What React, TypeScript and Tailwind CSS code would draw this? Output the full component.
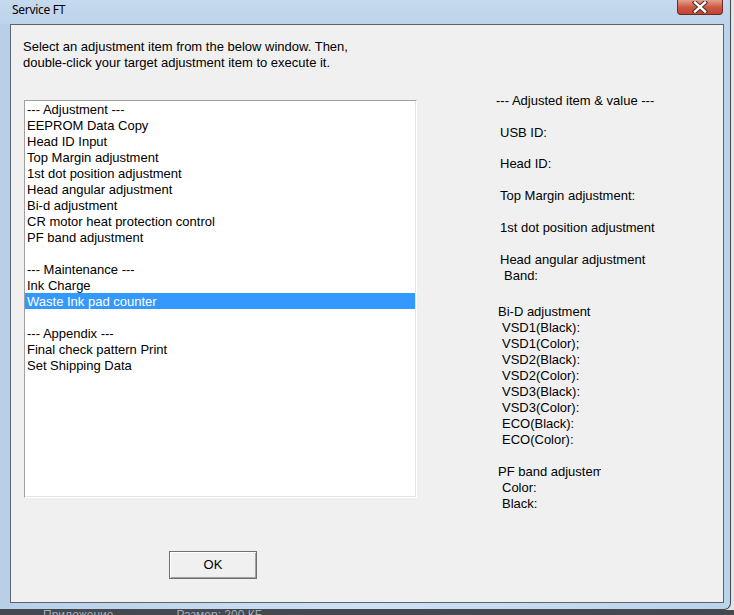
import React from "react";

const listItems: string[] = [
  "--- Adjustment ---",
  "EEPROM Data Copy",
  "Head ID Input",
  "Top Margin adjustment",
  "1st dot position adjustment",
  "Head angular adjustment",
  "Bi-d adjustment",
  "CR motor heat protection control",
  "PF band adjustment",
  "",
  "--- Maintenance ---",
  "Ink Charge",
  "Waste Ink pad counter",
  "",
  "--- Appendix ---",
  "Final check pattern Print",
  "Set Shipping Data",
];

const SELECTED = 12;

function CloseGlyph() {
  return (
    <svg width="16" height="12" viewBox="0 0 16 12">
      <path d="M3 1.5 L13 10.5 M13 1.5 L3 10.5" stroke="#4a2a26" strokeWidth="4.4" strokeLinecap="square" />
      <path d="M3 1.5 L13 10.5 M13 1.5 L3 10.5" stroke="#ffffff" strokeWidth="2.4" strokeLinecap="square" />
    </svg>
  );
}

function ListBox() {
  return (
    <div className="w-[393px] h-[398px] border-t border-l border-b border-r border-t-[#a0a0a0] border-l-[#a0a0a0] border-b-white border-r-white">
      <div className="w-full h-full bg-white border-r border-b border-[#e3e3e3] flex flex-col">
        {listItems.map((t, i) => (
          <div
            key={i}
            className={
              i === SELECTED
                ? "h-[16px] leading-[18px] pl-[2px] bg-[#3399ff] text-white whitespace-nowrap"
                : "h-[16px] leading-[18px] pl-[2px] text-black whitespace-nowrap"
            }
          >
            {t}
          </div>
        ))}
      </div>
    </div>
  );
}

function Label({ children, className = "" }: { children: React.ReactNode; className?: string }) {
  return <div className={"h-[16px] leading-[17px] whitespace-nowrap " + className}>{children}</div>;
}

function ValuesPanel() {
  return (
    <div className="flex flex-col pt-[67px] text-black">
      <Label>--- Adjusted item &amp; value ---</Label>
      <Label className="mt-[16px] ml-[4px]">USB ID:</Label>
      <Label className="mt-[15px] ml-[4px]">Head ID:</Label>
      <Label className="mt-[16px] ml-[4px]">Top Margin adjustment:</Label>
      <Label className="mt-[16px] ml-[4px]">1st dot position adjustment</Label>
      <Label className="mt-[16px] ml-[4px]">Head angular adjustment</Label>
      <Label className="ml-[8px]">Band:</Label>
      <Label className="mt-[20px] ml-[2px]">Bi-D adjustment</Label>
      <Label className="ml-[6px]">VSD1(Black):</Label>
      <Label className="ml-[6px]">VSD1(Color);</Label>
      <Label className="ml-[6px]">VSD2(Black):</Label>
      <Label className="ml-[6px]">VSD2(Color):</Label>
      <Label className="ml-[6px]">VSD3(Black):</Label>
      <Label className="ml-[6px]">VSD3(Color):</Label>
      <Label className="ml-[6px]">ECO(Black):</Label>
      <Label className="ml-[6px]">ECO(Color):</Label>
      <Label className="mt-[16px] ml-[2px] w-[103px] overflow-hidden">PF band adjustement</Label>
      <Label className="ml-[6px]">Color:</Label>
      <Label className="ml-[6px]">Black:</Label>
    </div>
  );
}

export default function App() {
  return (
    <div className="w-[734px] h-[615px] overflow-hidden bg-[#e4e4e4] flex flex-col font-['Liberation_Sans',Arial,sans-serif] text-[13px]">
      <div className="flex">
        {/* window frame */}
        <div className="w-[731px] h-[610px] flex flex-col rounded-br-[7px] border-r border-b border-[#3e4955] bg-gradient-to-r from-[#b8cfe8] via-[#cfe0f2] to-[#bcd3ec]">
          <div className="h-[24px] flex items-start bg-gradient-to-b from-[#c6daee] to-[#bdd3ea]">
            <div className="pl-[12px] pt-[2px] h-[16px] leading-[16px] text-[12px] text-black font-['Noto_Sans','Open_Sans',sans-serif] tracking-[-0.3px]">
              Service FT
            </div>
            <div className="ml-auto mr-[7px] w-[46px] h-[15px] rounded-b-[4px] border border-t-0 border-[#6b2a22] bg-gradient-to-b from-[#e2a18f] via-[#cf5a44] to-[#c14530] flex items-center justify-center">
              <CloseGlyph />
            </div>
          </div>
          <div className="ml-[10px] w-[714px] h-[579px] border border-[#5b6470] bg-[#f0f0f0] flex">
            <div className="w-[485px] flex flex-col pl-[12px] pt-[14px]">
              <div className="leading-[16px] text-black">
                <div className="whitespace-nowrap">Select an adjustment item from the below window. Then,</div>
                <div className="whitespace-nowrap">double-click your target adjustment item to execute it.</div>
              </div>
              <div className="mt-[29px] ml-[1px]">
                <ListBox />
              </div>
              <div className="mt-[53px] ml-[146px]">
                <button className="w-[88px] h-[28px] bg-[#f0f0f0] border border-[#6f6f6f] shadow-[inset_1px_1px_0_#ffffff,inset_-1px_-1px_0_#a0a0a0] text-black leading-[16px]">
                  OK
                </button>
              </div>
            </div>
            <ValuesPanel />
          </div>
        </div>
      </div>
      <div className="h-[5px] bg-[#45484c] overflow-hidden flex text-[12px] text-[#a3adb9]">
        <div className="ml-[43px] -mt-[3px] leading-[16px] whitespace-nowrap">Приложение</div>
        <div className="ml-[63px] -mt-[3px] leading-[16px] whitespace-nowrap">Размер: 200 КБ</div>
      </div>
    </div>
  );
}
